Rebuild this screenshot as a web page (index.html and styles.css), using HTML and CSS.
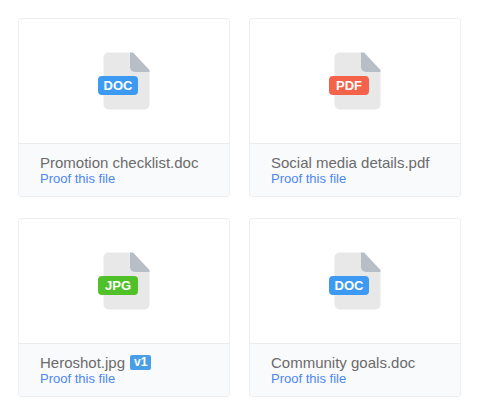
FILE: index.html
```html
<!DOCTYPE html>
<html lang="en">
<head>
    <meta charset="UTF-8">
    <meta name="viewport" content="width=device-width, initial-scale=1.0">
    <title>Files</title>
    <link rel="stylesheet" href="styles.css">
</head>
<body>
    <main class="files">
        <article class="card">
            <div class="preview">
                <svg class="file-icon" viewBox="0 0 52 58" role="img" aria-label="DOC file">
                    <path class="page" d="M10.500 0.500H33L51.500 19V52.500a5 5 0 0 1-5 5h-36a5 5 0 0 1-5-5v-47a5 5 0 0 1 5-5z"/>
                    <path class="fold" d="M32 0.500h3L51.500 18v2H37a5 5 0 0 1-5-5z"/>
                    <rect class="tag doc" x="0" y="24" width="40" height="19" rx="4"/>
                    <text class="tag-text" x="20" y="38">DOC</text>
                </svg>
            </div>
            <div class="details">
                <div class="name">Promotion checklist.doc</div>
                <a class="proof" href="#">Proof this file</a>
            </div>
        </article>

        <article class="card">
            <div class="preview">
                <svg class="file-icon" viewBox="0 0 52 58" role="img" aria-label="PDF file">
                    <path class="page" d="M10.500 0.500H33L51.500 19V52.500a5 5 0 0 1-5 5h-36a5 5 0 0 1-5-5v-47a5 5 0 0 1 5-5z"/>
                    <path class="fold" d="M32 0.500h3L51.500 18v2H37a5 5 0 0 1-5-5z"/>
                    <rect class="tag pdf" x="0" y="24" width="40" height="19" rx="4"/>
                    <text class="tag-text" x="20" y="38">PDF</text>
                </svg>
            </div>
            <div class="details">
                <div class="name">Social media details.pdf</div>
                <a class="proof" href="#">Proof this file</a>
            </div>
        </article>

        <article class="card">
            <div class="preview">
                <svg class="file-icon" viewBox="0 0 52 58" role="img" aria-label="JPG file">
                    <path class="page" d="M10.500 0.500H33L51.500 19V52.500a5 5 0 0 1-5 5h-36a5 5 0 0 1-5-5v-47a5 5 0 0 1 5-5z"/>
                    <path class="fold" d="M32 0.500h3L51.500 18v2H37a5 5 0 0 1-5-5z"/>
                    <rect class="tag jpg" x="0" y="24" width="40" height="19" rx="4"/>
                    <text class="tag-text" x="20" y="38">JPG</text>
                </svg>
            </div>
            <div class="details">
                <div class="name">Heroshot.jpg <span class="version">v1</span></div>
                <a class="proof" href="#">Proof this file</a>
            </div>
        </article>

        <article class="card">
            <div class="preview">
                <svg class="file-icon" viewBox="0 0 52 58" role="img" aria-label="DOC file">
                    <path class="page" d="M10.500 0.500H33L51.500 19V52.500a5 5 0 0 1-5 5h-36a5 5 0 0 1-5-5v-47a5 5 0 0 1 5-5z"/>
                    <path class="fold" d="M32 0.500h3L51.500 18v2H37a5 5 0 0 1-5-5z"/>
                    <rect class="tag doc" x="0" y="24" width="40" height="19" rx="4"/>
                    <text class="tag-text" x="20" y="38">DOC</text>
                </svg>
            </div>
            <div class="details">
                <div class="name">Community goals.doc</div>
                <a class="proof" href="#">Proof this file</a>
            </div>
        </article>
    </main>
</body>
</html>
```

FILE: styles.css
```css
* {
    box-sizing: border-box;
}

body {
    margin: 0;
    background: #fff;
    font-family: "Liberation Sans", Helvetica, Arial, sans-serif;
}

.files {
    display: grid;
    grid-template-columns: 1fr 1fr;
    gap: 21px 19px;
    padding: 18px 21px 18px 18px;
}

.card {
    border: 1px solid #eceff1;
    border-radius: 3px;
    overflow: hidden;
}

.preview {
    display: flex;
    justify-content: center;
    padding: 33px 0;
}

.file-icon {
    display: block;
    width: 52px;
    height: 58px;
}

.page {
    fill: #e8e8e8;
}

.fold {
    fill: #b8bec6;
}

.doc {
    fill: #3d9af2;
}

.pdf {
    fill: #f5624a;
}

.jpg {
    fill: #50c128;
}

.tag-text {
    fill: #fff;
    font-size: 13px;
    font-weight: bold;
    text-anchor: middle;
}

.details {
    padding: 10px 21px 9px;
    border-top: 1px solid #e9edf0;
    background: #f9fafc;
}

.name {
    display: flex;
    align-items: center;
    gap: 5px;
    color: #6b6b6b;
    font-size: 15px;
    line-height: 17px;
}

.version {
    padding: 0 4px;
    border-radius: 2px;
    background: #489fe6;
    color: #fff;
    font-size: 12px;
    font-weight: bold;
    line-height: 15px;
}

.proof {
    display: block;
    color: #4b87f5;
    font-size: 13px;
    line-height: 16px;
    text-decoration: none;
}
```
